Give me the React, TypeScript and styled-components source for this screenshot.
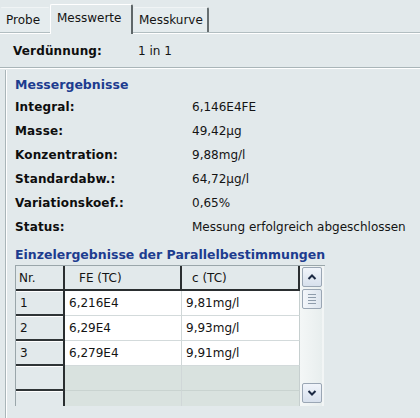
import React from 'react';
import styled, { createGlobalStyle } from 'styled-components';

const Global = createGlobalStyle`
  html, body { margin: 0; padding: 0; background: #e2e9eb; }
  body { font-family: "DejaVu Sans", Verdana, sans-serif; font-size: 12px; color: #141414; }
`;

const Page = styled.div`
  width: 420px;
  height: 418px;
  overflow: hidden;
  background: #e2e9eb;
  display: flex;
  flex-direction: column;
`;

const TabStrip = styled.div`
  height: 33px;
  flex: none;
  display: flex;
  align-items: flex-end;
  border-bottom: 1px solid #b2bec1;
  box-shadow: 0 1px 0 #ffffff;
  box-sizing: border-box;
`;

const Tab = styled.div<{ $active?: boolean; $w: number; $pl: number; $edge?: boolean }>`
  box-sizing: border-box;
  width: ${p => p.$w}px;
  height: ${p => (p.$active ? 30 : 25)}px;
  margin-bottom: ${p => (p.$active ? -2 : 0)}px;
  padding-left: ${p => p.$pl}px;
  padding-bottom: ${p => (p.$active ? 4 : 0)}px;
  display: flex;
  align-items: center;
  background: ${p => (p.$active ? '#e2e9eb' : '#e5ecee')};
  border-top: 1px solid ${p => (p.$active ? '#ffffff' : '#f0f4f5')};
  border-left: 1px solid ${p => (p.$active ? '#ffffff' : 'transparent')};
  border-right: ${p => (p.$active ? '2px solid #5f6769' : p.$edge ? '2px solid #676f71' : '1px solid transparent')};
  border-radius: 2px 2px 0 0;
  white-space: nowrap;
  position: relative;
`;

const Line = styled.div`
  display: flex;
  align-items: center;
  height: 24px;
`;

const TopLine = styled(Line)`
  height: 35px;
  padding-top: 1px;
  padding-left: 13px;
  box-sizing: border-box;
  border-bottom: 1px solid #a9b5b8;
  box-shadow: 0 1px 0 #ffffff;
  flex: none;
`;

const Label = styled.span<{ $w: number }>`
  width: ${p => p.$w}px;
  flex: none;
  font-weight: bold;
  letter-spacing: 0.15px;
  color: #0e0e0e;
`;

const Value = styled.span`
  white-space: nowrap;
`;

const Group = styled.div`
  margin-top: 2px;
  margin-left: 5px;
  flex: 1;
  border-left: 1px solid #aab6b9;
  box-shadow: inset 1px 0 0 #ffffff;
  padding-left: 9px;
  display: flex;
  flex-direction: column;
`;

const GroupTitle = styled.div<{ $mt: number }>`
  margin-top: ${p => p.$mt}px;
  height: 20px;
  line-height: 20px;
  font-weight: bold;
  font-size: 12.5px;
  color: #1d3c8f;
  white-space: nowrap;
`;

const InfoList = styled.div`
  display: flex;
  flex-direction: column;
`;

const GridFrame = styled.div`
  display: flex;
  width: 310px;
  height: 141px;
  overflow: hidden;
  border-top: 1px solid #9aa6aa;
  border-left: 1px solid #9aa6aa;
  box-sizing: border-box;
`;

const GridBody = styled.div`
  display: grid;
  grid-template-columns: 49px 117px 118px;
  grid-auto-rows: 25px;
  align-content: start;
`;

const HeadCell = styled.div<{ $pl: number }>`
  height: 25px;
  box-sizing: border-box;
  display: flex;
  align-items: center;
  padding-left: ${p => p.$pl}px;
  background: #e2e9eb;
  border-bottom: 2px solid #2a2e30;
  border-right: 2px solid #2a2e30;
  white-space: nowrap;
`;

const RowHead = styled.div`
  box-sizing: border-box;
  display: flex;
  align-items: center;
  padding-left: 4px;
  background: #e2e9eb;
  border-bottom: 2px solid #2f3436;
  border-right: 2px solid #2a2e30;
  box-shadow: inset 0 1px 0 #ffffff;
`;

const Cell = styled.div<{ $empty?: boolean; $last?: boolean }>`
  box-sizing: border-box;
  display: flex;
  align-items: center;
  padding-left: 4px;
  background: ${p => (p.$empty ? '#d9e2df' : '#ffffff')};
  border-bottom: 1px solid ${p => (p.$empty ? '#c9d3d0' : '#d3dadb')};
  border-right: 1px solid ${p => (p.$last ? '#c6cfcf' : '#d0d7d8')};
  white-space: nowrap;
`;

const ScrollBar = styled.div`
  width: 24px;
  flex: none;
  box-sizing: border-box;
  padding: 1px 2px 3px 2px;
  background: linear-gradient(90deg, #f4f7f7, #e8eeee);
  display: flex;
  flex-direction: column;
  border-right: 2px solid #f2f5f5;
`;

const ScrollBtn = styled.div<{ $mt?: number }>`
  margin-top: ${p => p.$mt ?? 0}px;
  width: 20px;
  height: 20px;
  box-sizing: border-box;
  border: 1px solid #9aa6b4;
  border-radius: 2px;
  background: linear-gradient(180deg, #f1f5fb, #d7e0ec);
  display: flex;
  align-items: center;
  justify-content: center;
  flex: none;
`;

const Thumb = styled(ScrollBtn)`
  flex-direction: column;
  gap: 2px;
  background: linear-gradient(90deg, #f3f6fa, #dde5ee);
`;

const Grip = styled.div`
  width: 8px;
  height: 1px;
  background: #8e9cab;
`;

const Spacer = styled.div`
  flex: 1;
`;

const Chevron: React.FC<{ up?: boolean }> = ({ up }) => (
  <svg width="10" height="8" viewBox="0 0 10 8">
    <path
      d={up ? 'M1.5 6 L5 2.5 L8.5 6' : 'M1.5 2 L5 5.5 L8.5 2'}
      fill="none"
      stroke="#1c2a44"
      strokeWidth="2"
    />
  </svg>
);

const results: [string, string][] = [
  ['Integral:', '6,146E4FE'],
  ['Masse:', '49,42µg'],
  ['Konzentration:', '9,88mg/l'],
  ['Standardabw.:', '64,72µg/l'],
  ['Variationskoef.:', '0,65%'],
  ['Status:', 'Messung erfolgreich abgeschlossen'],
];

const rows: [string, string, string][] = [
  ['1', '6,216E4', '9,81mg/l'],
  ['2', '6,29E4', '9,93mg/l'],
  ['3', '6,279E4', '9,91mg/l'],
  ['', '', ''],
  ['', '', ''],
];

export default function App() {
  return (
    <Page>
      <Global />
      <TabStrip>
        <Tab $w={50} $pl={5}>Probe</Tab>
        <Tab $w={83} $pl={6} $active>Messwerte</Tab>
        <Tab $w={76} $pl={5} $edge>Messkurve</Tab>
      </TabStrip>
      <TopLine>
        <Label $w={125}>Verdünnung:</Label>
        <Value>1 in 1</Value>
      </TopLine>
      <Group>
        <GroupTitle $mt={5}>Messergebnisse</GroupTitle>
        <InfoList>
          {results.map(([l, v]) => (
            <Line key={l}>
              <Label $w={177}>{l}</Label>
              <Value>{v}</Value>
            </Line>
          ))}
        </InfoList>
        <GroupTitle $mt={6}>Einzelergebnisse der Parallelbestimmungen</GroupTitle>
        <GridFrame>
          <GridBody>
            <HeadCell $pl={3}>Nr.</HeadCell>
            <HeadCell $pl={14}>FE (TC)</HeadCell>
            <HeadCell $pl={10}>c (TC)</HeadCell>
            {rows.map(([n, fe, c], i) => (
              <React.Fragment key={i}>
                <RowHead>{n}</RowHead>
                <Cell $empty={!n}>{fe}</Cell>
                <Cell $empty={!n} $last>{c}</Cell>
              </React.Fragment>
            ))}
          </GridBody>
          <ScrollBar>
            <ScrollBtn>
              <Chevron up />
            </ScrollBtn>
            <Thumb $mt={2}>
              <Grip />
              <Grip />
              <Grip />
              <Grip />
            </Thumb>
            <Spacer />
            <ScrollBtn>
              <Chevron />
            </ScrollBtn>
          </ScrollBar>
        </GridFrame>
      </Group>
    </Page>
  );
}
